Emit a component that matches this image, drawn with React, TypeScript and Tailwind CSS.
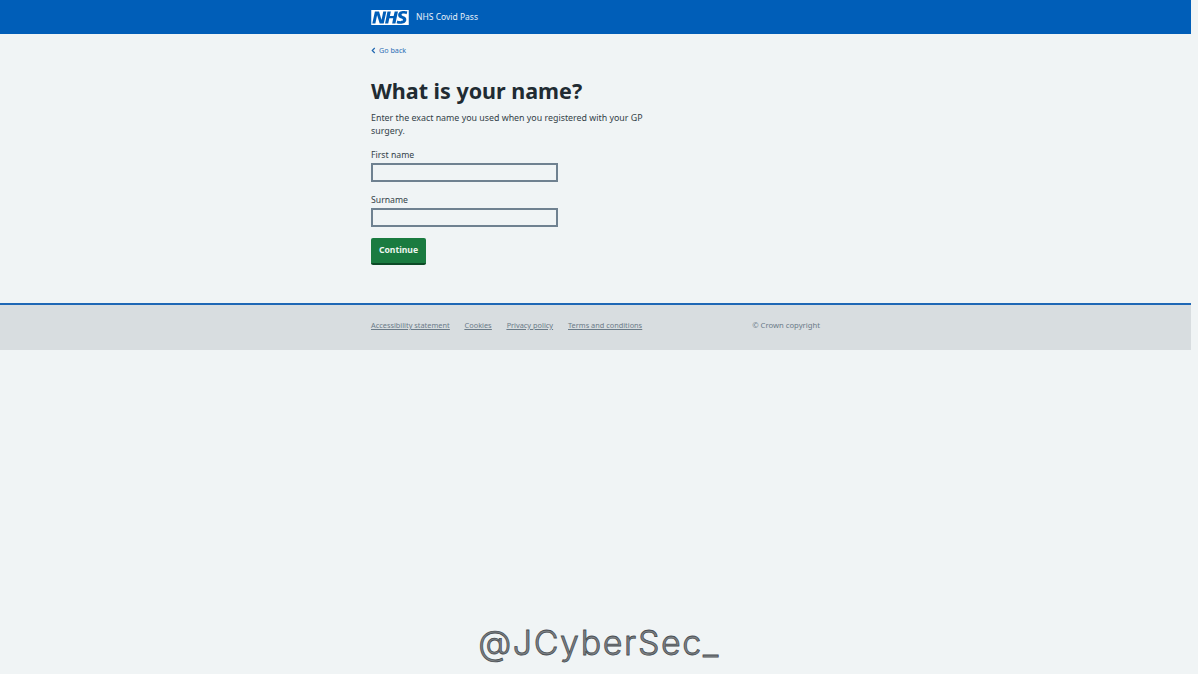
export default function App() {
  return (
    <div className="h-[674px] w-[1198px] overflow-hidden bg-[#f0f4f5] font-['Noto_Sans',sans-serif] text-[#212b32]">
      <div className="w-[1191px]">
        <header className="h-[34px] bg-[#005eb8]">
          <div className="mx-auto flex h-full w-[449px] items-center gap-[7px]">
            <svg viewBox="0 0 40 16" className="h-[15px] w-[38px]" role="img" aria-label="NHS">
              <path fill="#fff" d="M0 0h40v16H0z" />
              <path fill="#005eb8" d="M3.9 1.5h4.4l2.6 9h.1l1.8-9h3.3l-2.8 13H9l-2.7-9h-.1l-1.8 9H1.1M17.3 1.5h3.6l-1 4.9h4L25 1.5h3.5l-2.7 13h-3.5l1.1-5.6h-4.1l-1.2 5.6h-3.4M37.7 4.4c-.7-.3-1.6-.6-2.9-.6-1.4 0-2.5.2-2.5 1.3 0 1.8 5.1 1.2 5.1 5.1 0 3.6-3.3 4.5-6.4 4.5-1.3 0-2.9-.3-4-.7l.8-2.7c.7.4 2.1.7 3.2.7s2.8-.2 2.8-1.5c0-2.1-5.1-1.3-5.1-5 0-3.4 2.9-4.4 5.8-4.4 1.6 0 3.1.2 4 .6" />
            </svg>
            <span className="text-[8.5px] text-[#e8f0f8]">NHS Covid Pass</span>
          </div>
        </header>

        <main className="mx-auto h-[269px] w-[449px] pt-[10px]">
          <a className="flex h-[12px] items-center gap-[3px] text-[7.2px] leading-[12px] text-[#2f70b5]">
            <svg viewBox="0 0 6 8" className="h-[7px] w-[5px]" fill="none" stroke="#1f66b0" strokeWidth="1.4">
              <path d="M4.5 1 1.5 4l3 3" />
            </svg>
            Go back
          </a>
          <h1 className="mt-[19px] text-[21.5px] font-bold leading-[32px] text-[#212b32]">What is your name?</h1>
          <p className="mt-[5px] w-[285px] text-[8.85px] leading-[13px] text-[#333f48]">
            Enter the exact name you used when you registered with your GP surgery.
          </p>
          <div className="mt-[10px] flex flex-col gap-[11px]">
            <label className="flex flex-col">
              <span className="h-[15px] text-[8.7px] leading-[14px] text-[#333f48]">First name</span>
              <input className="h-[19px] w-[187px] border-2 border-[#6f8190] bg-[#f0f4f5]" />
            </label>
            <label className="flex flex-col">
              <span className="h-[15px] text-[8.7px] leading-[14px] text-[#333f48]">Surname</span>
              <input className="h-[19px] w-[187px] border-2 border-[#6f8190] bg-[#f0f4f5]" />
            </label>
          </div>
          <button className="mt-[11px] h-[27px] w-[55px] rounded-[2px] border-b-2 border-[#0c4a26] bg-[#1a7b40] text-[8.6px] font-bold text-[#eef6f1]">
            Continue
          </button>
        </main>

        <footer className="h-[47px] border-t-[2px] border-[#1f67b5] bg-[#d8dde0]">
          <div className="mx-auto flex h-full w-[449px] items-center justify-between pb-[4px] text-[7.35px] text-[#6b7b88]">
            <nav className="flex gap-[15px] underline">
              <a>Accessibility statement</a>
              <a>Cookies</a>
              <a>Privacy policy</a>
              <a>Terms and conditions</a>
            </nav>
            <span className="text-[7.7px]">© Crown copyright</span>
          </div>
        </footer>
      </div>

      <div className="mt-[271px] text-center font-['Inter',sans-serif] text-[34px] font-light leading-[44px] tracking-[1.6px] text-[#7d8286] [-webkit-text-stroke:0.8px_#4a4f53]">
        @JCyberSec_
      </div>
    </div>
  );
}
